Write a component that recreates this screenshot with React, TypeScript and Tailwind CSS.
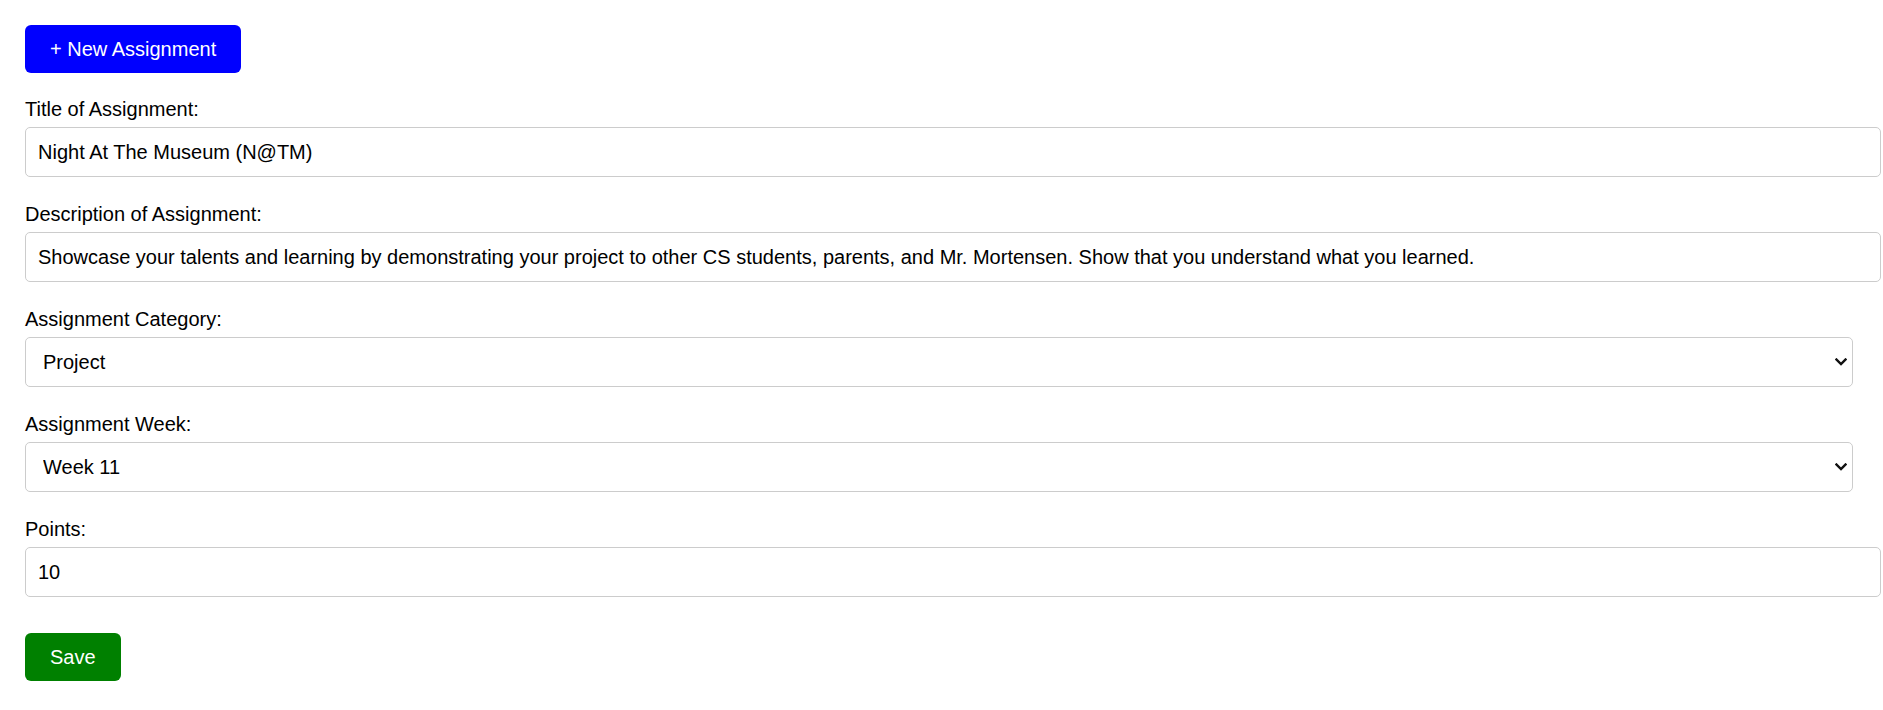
import React from 'react';

const categories = ['Project', 'Homework', 'Quiz', 'Test'];
const weeks = Array.from({ length: 18 }, (_, i) => `Week ${i + 1}`);

function Chevron() {
  return (
    <svg
      className="pointer-events-none absolute right-[6px] top-1/2 -translate-y-1/2"
      width="12"
      height="8"
      viewBox="0 0 12 8"
      fill="none"
    >
      <path d="M1.5 1.5 L6 6 L10.5 1.5" stroke="#111" strokeWidth="2.4" strokeLinecap="square" />
    </svg>
  );
}

function Field({ label, children }: { label: string; children: React.ReactNode }) {
  return (
    <div className="mb-[26px] flex flex-col items-start">
      <label className="mb-[6px] block leading-[23px]">{label}</label>
      {children}
    </div>
  );
}

export default function App() {
  const inputCls =
    'h-[50px] w-[1856px] rounded-[5px] border border-[#cccccc] bg-white pl-[12px] pr-[12px] leading-[23px] text-black outline-none';
  const selectCls =
    'h-[50px] w-[1828px] appearance-none rounded-[5px] border border-[#cccccc] bg-white pl-[17px] pr-[30px] leading-[23px] text-black outline-none';

  return (
    <div className="min-h-screen bg-white px-[25px] pt-[25px] font-['Liberation_Sans',Arial,sans-serif] text-[20px] text-black">
      <button className="h-[48px] rounded-[6px] bg-[#0000ff] px-[25px] leading-[23px] text-white">
        + New Assignment
      </button>

      <form className="mt-[25px] flex flex-col items-start" onSubmit={(e) => e.preventDefault()}>
        <Field label="Title of Assignment:">
          <input className={inputCls} defaultValue="Night At The Museum (N@TM)" />
        </Field>
        <Field label="Description of Assignment:">
          <input
            className={inputCls}
            defaultValue="Showcase your talents and learning by demonstrating your project to other CS students, parents, and Mr. Mortensen. Show that you understand what you learned."
          />
        </Field>
        <Field label="Assignment Category:">
          <div className="relative">
            <select className={selectCls} defaultValue="Project">
              {categories.map((c) => (
                <option key={c}>{c}</option>
              ))}
            </select>
            <Chevron />
          </div>
        </Field>
        <Field label="Assignment Week:">
          <div className="relative">
            <select className={selectCls} defaultValue="Week 11">
              {weeks.map((w) => (
                <option key={w}>{w}</option>
              ))}
            </select>
            <Chevron />
          </div>
        </Field>
        <div className="flex flex-col items-start">
          <label className="mb-[6px] block leading-[23px]">Points:</label>
          <input className={inputCls} defaultValue="10" />
        </div>

        <button
          type="submit"
          className="mt-[36px] h-[48px] rounded-[6px] bg-[#008000] px-[25px] leading-[23px] text-white"
        >
          Save
        </button>
      </form>
    </div>
  );
}
